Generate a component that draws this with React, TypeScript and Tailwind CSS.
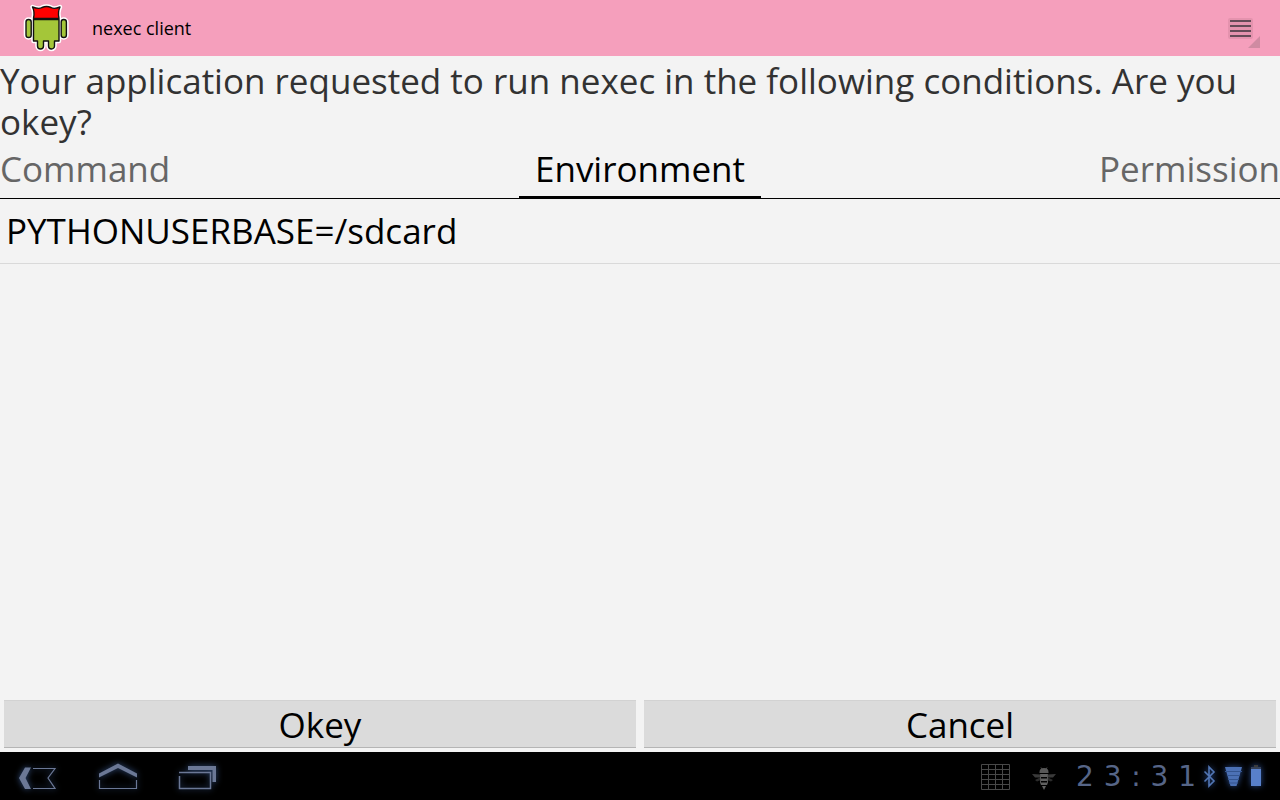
import { useState } from "react";

const tabs = ["Command", "Environment", "Permission"];

function AppLogo() {
  const hat = "M32.5 7 Q39 9.5 42 7.5 Q46.500 5.500 51 7.500 Q54 9.500 60 7 Q57.500 12 59 18.500 H33.500 Q35 12 32.500 7 Z";
  const body =
    "M33.500 19.500 H59 V41 H54.500 V46 a3 3 0 0 1 -6 0 V41 H43.500 V46 a3 3 0 0 1 -6 0 V41 H33.500 Z";
  return (
    <svg className="h-14 w-15" viewBox="16 0 60 56" aria-hidden="true">
      <g fill="#fff" stroke="#fff" strokeWidth="4.5" strokeLinejoin="round">
        <path d={hat} />
        <path d={body} />
        <rect x="26" y="19.5" width="5.2" height="18" rx="2.6" />
        <rect x="61.2" y="19.5" width="5.2" height="18" rx="2.6" />
      </g>
      <g fill="#a4c639" stroke="#111" strokeWidth="1.4" strokeLinejoin="round">
        <path d={body} />
        <rect x="26" y="19.5" width="5.2" height="18" rx="2.6" />
        <rect x="61.2" y="19.5" width="5.2" height="18" rx="2.6" />
        <path fill="#f00" d={hat} />
      </g>
    </svg>
  );
}

function MenuIcon() {
  return (
    <svg className="h-14 w-10" viewBox="1224 0 40 56" aria-hidden="true">
      <rect x="1228" y="18" width="25" height="21" rx="2" fill="#d98ca5" opacity=".6" />
      <path d="M1230 21h21M1230 26h21M1230 31h21M1230 36h21" stroke="#654b57" strokeWidth="2" />
      <path d="M1260 36v12h-12z" fill="#cf8ba2" />
    </svg>
  );
}

const glow = "drop-shadow-[0_0_3px_#34507f]";

function BackIcon() {
  return (
    <svg className={`h-12 w-12 ${glow}`} viewBox="14 752 48 48" aria-hidden="true">
      <path d="M25 767.5h6l-5.5 10.500 5.500 11h-6l-6-11z" fill="#6b7896" />
      <path d="M33 768.5h22l-7 9.500 7 10.500h-22" fill="none" stroke="#6b7896" strokeWidth="1.200" />
    </svg>
  );
}

function HomeIcon() {
  return (
    <svg className={`h-12 w-12 ${glow}`} viewBox="94 752 48 48" aria-hidden="true">
      <path d="M99 773.500l19-10 19 10v4l-19-9.500-19 9.500z" fill="#6b7896" />
      <path d="M99.500 780v8.500h37v-8.500" fill="none" stroke="#6b7896" strokeWidth="1.200" />
    </svg>
  );
}

function RecentIcon() {
  return (
    <svg className={`h-12 w-12 ${glow}`} viewBox="174 752 48 48" aria-hidden="true">
      <path d="M188 766h28v16h-3.500v-12h-24.500z" fill="#6b7896" />
      <path d="M179 772.500h31.500v16h-31v-12.500" fill="none" stroke="#6b7896" strokeWidth="1.500" />
    </svg>
  );
}

function GridIcon() {
  return (
    <svg className="h-12 w-8" viewBox="980 752 32 48" aria-hidden="true">
      <path
        d="M981.500 764.500h28v25h-28zM981.500 769.500h28M981.500 774.500h28M981.500 779.500h28M981.500 784.500h28M988.500 764v26M995.500 764v26M1002.500 764v26"
        fill="none"
        stroke="#484848"
      />
    </svg>
  );
}

function BeeIcon() {
  return (
    <svg className="h-12 w-6" viewBox="0 0 24 48" aria-hidden="true">
      <path d="M0 22l9 .5v3H3zM24 22l-9 .5v3h6z" fill="#3a3a3a" />
      <path d="M8 25.500l-5 2.500 2 1.500 4-1.500zM16 25.500l5 2.500-2 1.500-4-1.500z" fill="#2c2c2c" />
      <path d="M9 15.500l1.500 2M15 15.500l-1.500 2" stroke="#555" />
      <path d="M7.500 20q0-4 4.500-4t4.500 4v1h-9z" fill="#585858" />
      <path d="M8 22h8v3H8zM8 26.500h8v2.500H8zM8 30.500h8l-1 2.500H9zM10 34h4l-2 4z" fill="#606060" />
      <path d="M8.500 22v9M15.500 22v9" stroke="#555" />
    </svg>
  );
}

function StatusIcons() {
  return (
    <svg className="h-12 w-17 drop-shadow-[0_0_3px_#2a4c8c]" viewBox="1200 752 68 48" aria-hidden="true">
      <path d="M1204.500 771.500l9.500 9.500-5 5v-19l5 5-9.500 9.500" fill="none" stroke="#5276b5" strokeWidth="1.600" />
      <path d="M1225 767h17l-5.500 19h-6z" fill="#4c71b5" />
      <path d="M1225 771.500h17M1227 775.500h13M1228 779.500h11M1229 783h9" stroke="#345590" />
      <rect x="1254" y="765" width="4" height="2" fill="#3b3b3b" />
      <rect x="1251" y="767" width="10" height="3" fill="#364157" />
      <rect x="1251" y="769" width="10" height="17" fill="#5880ca" />
    </svg>
  );
}

export default function App() {
  const [active, setActive] = useState("Environment");
  const action =
    "h-12 flex-1 border-t border-b border-t-[#d2d2d2] border-b-[#b5b5b5] bg-[#dbdbdb] text-center leading-[48px] text-black";

  return (
    <div className="flex min-h-screen flex-col bg-[#f3f3f3] font-['Open_Sans','Noto_Sans',sans-serif] text-[35px] text-black">
      <header className="flex h-14 items-center bg-[#f59fbc] px-4">
        <AppLogo />
        <h1 className="ml-4 flex-1 text-lg">nexec client</h1>
        <button type="button" aria-label="Menu">
          <MenuIcon />
        </button>
      </header>

      <main className="flex flex-1 flex-col">
        <p className="pt-1 leading-[41px] text-[#323232]">
          Your application requested to run nexec in the following conditions. Are you okey?
        </p>

        <div role="tablist" className="grid grid-cols-[1fr_auto_1fr] border-b border-black">
          {tabs.map((tab) => (
            <button
              key={tab}
              type="button"
              role="tab"
              aria-selected={active === tab}
              onClick={() => setActive(tab)}
              className={`h-14 border-b-2 leading-[54px] first:justify-self-start last:justify-self-end ${
                active === tab ? "border-black px-4 text-black" : "border-transparent text-[#666]"
              }`}
            >
              {tab}
            </button>
          ))}
        </div>

        <ul className="flex-1">
          <li className="border-b border-[#d9d9d9] px-1.5 leading-[64px]">PYTHONUSERBASE=/sdcard</li>
        </ul>

        <div className="flex gap-2 px-1 pb-1">
          <button type="button" className={action}>
            Okey
          </button>
          <button type="button" className={action}>
            Cancel
          </button>
        </div>
      </main>

      <footer className="flex h-12 items-center justify-between bg-black pr-3 pl-3.5">
        <nav className="flex gap-8">
          <button type="button" aria-label="Back">
            <BackIcon />
          </button>
          <button type="button" aria-label="Home">
            <HomeIcon />
          </button>
          <button type="button" aria-label="Recent apps">
            <RecentIcon />
          </button>
        </nav>
        <div className="flex items-center">
          <GridIcon />
          <div className="ml-5">
            <BeeIcon />
          </div>
          <time className="mr-1 ml-5 flex w-30 justify-between pt-0.5 font-['DejaVu_Sans',sans-serif] text-[28px] leading-[46px] text-[#566587]">
            <span>2</span>
            <span>3</span>
            <span>:</span>
            <span>3</span>
            <span>1</span>
          </time>
          <StatusIcons />
        </div>
      </footer>
    </div>
  );
}
